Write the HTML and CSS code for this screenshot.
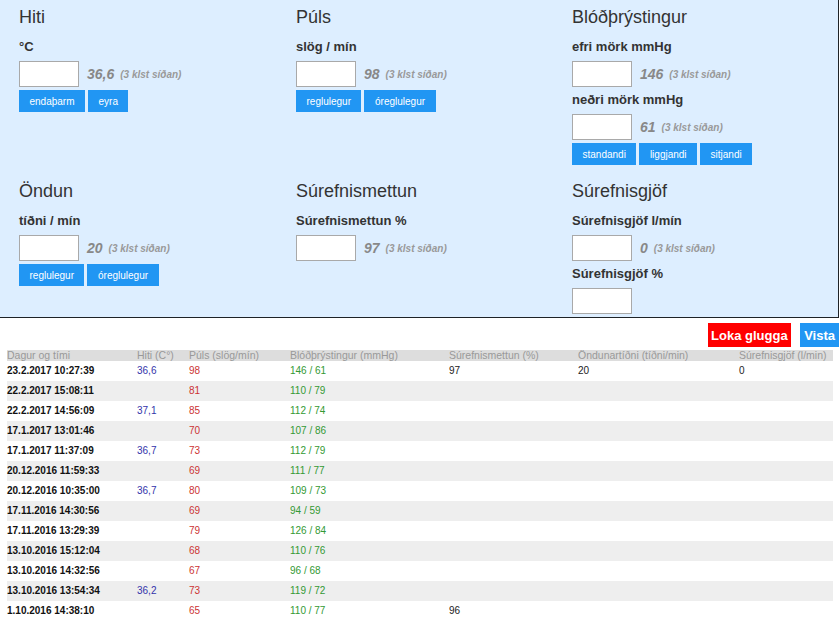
FILE: index.html
```html
<!DOCTYPE html>
<html lang="is">
<head>
<meta charset="utf-8">
<title>Lífsmörk</title>
<link rel="stylesheet" href="styles.css">
</head>
<body>
<div class="panel">
  <section class="sec">
    <h2>Hiti</h2>
    <label>°C</label>
    <div class="inrow"><input type="text"><span class="val">36,6</span><span class="ago">(3 klst síðan)</span></div>
    <div class="btns"><button>endaþarm</button><button>eyra</button></div>
  </section>
  <section class="sec">
    <h2>Púls</h2>
    <label>slög / mín</label>
    <div class="inrow"><input type="text"><span class="val">98</span><span class="ago">(3 klst síðan)</span></div>
    <div class="btns"><button>reglulegur</button><button>óreglulegur</button></div>
  </section>
  <section class="sec">
    <h2>Blóðþrýstingur</h2>
    <label>efri mörk mmHg</label>
    <div class="inrow"><input type="text"><span class="val">146</span><span class="ago">(3 klst síðan)</span></div>
    <label>neðri mörk mmHg</label>
    <div class="inrow"><input type="text"><span class="val">61</span><span class="ago">(3 klst síðan)</span></div>
    <div class="btns"><button>standandi</button><button>liggjandi</button><button>sitjandi</button></div>
  </section>
  <section class="sec">
    <h2>Öndun</h2>
    <label>tíðni / mín</label>
    <div class="inrow"><input type="text"><span class="val">20</span><span class="ago">(3 klst síðan)</span></div>
    <div class="btns"><button>reglulegur</button><button>óreglulegur</button></div>
  </section>
  <section class="sec">
    <h2>Súrefnismettun</h2>
    <label>Súrefnismettun %</label>
    <div class="inrow"><input type="text"><span class="val">97</span><span class="ago">(3 klst síðan)</span></div>
  </section>
  <section class="sec">
    <h2>Súrefnisgjöf</h2>
    <label>Súrefnisgjöf l/mín</label>
    <div class="inrow"><input type="text"><span class="val">0</span><span class="ago">(3 klst síðan)</span></div>
    <label>Súrefnisgjöf %</label>
    <div class="inrow"><input type="text"></div>
  </section>
</div>
<div class="actions">
  <button class="act close">Loka glugga</button>
  <button class="act save">Vista</button>
</div>
<table class="hist">
  <colgroup>
    <col class="c1"><col class="c2"><col class="c3"><col class="c4"><col class="c5"><col class="c6"><col class="c7">
  </colgroup>
  <thead>
    <tr><th>Dagur og tími</th><th>Hiti (C°)</th><th>Púls (slög/mín)</th><th>Blóðþrýstingur (mmHg)</th><th>Súrefnismettun (%)</th><th>Öndunartíðni (tíðni/min)</th><th>Súrefnisgjöf (l/min)</th></tr>
  </thead>
  <tbody>
    <tr><td class="d">23.2.2017 10:27:39</td><td class="t">36,6</td><td class="p">98</td><td class="b">146 / 61</td><td>97</td><td>20</td><td>0</td></tr>
    <tr><td class="d">22.2.2017 15:08:11</td><td class="t"></td><td class="p">81</td><td class="b">110 / 79</td><td></td><td></td><td></td></tr>
    <tr><td class="d">22.2.2017 14:56:09</td><td class="t">37,1</td><td class="p">85</td><td class="b">112 / 74</td><td></td><td></td><td></td></tr>
    <tr><td class="d">17.1.2017 13:01:46</td><td class="t"></td><td class="p">70</td><td class="b">107 / 86</td><td></td><td></td><td></td></tr>
    <tr><td class="d">17.1.2017 11:37:09</td><td class="t">36,7</td><td class="p">73</td><td class="b">112 / 79</td><td></td><td></td><td></td></tr>
    <tr><td class="d">20.12.2016 11:59:33</td><td class="t"></td><td class="p">69</td><td class="b">111 / 77</td><td></td><td></td><td></td></tr>
    <tr><td class="d">20.12.2016 10:35:00</td><td class="t">36,7</td><td class="p">80</td><td class="b">109 / 73</td><td></td><td></td><td></td></tr>
    <tr><td class="d">17.11.2016 14:30:56</td><td class="t"></td><td class="p">69</td><td class="b">94 / 59</td><td></td><td></td><td></td></tr>
    <tr><td class="d">17.11.2016 13:29:39</td><td class="t"></td><td class="p">79</td><td class="b">126 / 84</td><td></td><td></td><td></td></tr>
    <tr><td class="d">13.10.2016 15:12:04</td><td class="t"></td><td class="p">68</td><td class="b">110 / 76</td><td></td><td></td><td></td></tr>
    <tr><td class="d">13.10.2016 14:32:56</td><td class="t"></td><td class="p">67</td><td class="b">96 / 68</td><td></td><td></td><td></td></tr>
    <tr><td class="d">13.10.2016 13:54:34</td><td class="t">36,2</td><td class="p">73</td><td class="b">119 / 72</td><td></td><td></td><td></td></tr>
    <tr><td class="d">1.10.2016 14:38:10</td><td class="t"></td><td class="p">65</td><td class="b">110 / 77</td><td>96</td><td></td><td></td></tr>
  </tbody>
</table>
</body>
</html>
```

FILE: styles.css
```css
html, body {
  margin: 0;
  padding: 0;
  background: #fff;
  font-family: "Liberation Sans", Arial, sans-serif;
  color: #222;
  overflow-x: hidden;
}

.panel {
  box-sizing: border-box;
  width: 839px;
  background: #ddeeff;
  border-right: 1px solid #1e2226;
  border-bottom: 1px solid #1e2226;
  padding: 7px 0 3px 19px;
  display: grid;
  grid-template-columns: 277px 276px 1fr;
  row-gap: 16px;
}

.sec {
  display: flex;
  flex-direction: column;
  align-items: flex-start;
}

.sec h2 {
  margin: 0 0 7px;
  font-size: 18px;
  line-height: 20px;
  font-weight: normal;
  color: #333;
}

.sec label {
  display: block;
  margin: 5px 0 7px;
  font-size: 13px;
  line-height: 15px;
  font-weight: bold;
  color: #333;
}

.inrow {
  display: flex;
  align-items: center;
  height: 26px;
}

.inrow input {
  box-sizing: border-box;
  width: 60px;
  height: 26px;
  margin: 0;
  padding: 2px 4px;
  border: 1px solid #a9a9a9;
  background: #fff;
}

.val {
  margin-left: 8px;
  font-size: 14px;
  font-weight: bold;
  font-style: italic;
  color: #888;
}

.ago {
  margin-left: 6px;
  font-size: 10px;
  font-weight: bold;
  font-style: italic;
  color: #999;
}

.btns {
  display: flex;
  gap: 3px;
  margin-top: 3px;
}

.btns button {
  height: 22px;
  margin: 0;
  padding: 0 10.5px;
  border: 0;
  background: #2196f3;
  color: #fff;
  font-family: "Liberation Sans", Arial, sans-serif;
  font-size: 10px;
}

.actions {
  display: flex;
  justify-content: flex-end;
  gap: 9px;
  width: 839px;
  margin-top: 5px;
}

.act {
  height: 24px;
  margin: 0;
  border: 0;
  color: #fff;
  font-family: "Liberation Sans", Arial, sans-serif;
  font-size: 13px;
  font-weight: bold;
}

.act.close { background: #ff0000; padding: 0 3.5px; }
.act.save { background: #2196f3; padding: 0 4px; }

.hist {
  margin: 3px 0 0 7px;
  width: 826px;
  table-layout: fixed;
  border-collapse: collapse;
  font-size: 10px;
}

.c1 { width: 130px; }
.c2 { width: 52px; }
.c3 { width: 101px; }
.c4 { width: 159px; }
.c5 { width: 129px; }
.c6 { width: 161px; }
.c7 { width: 94px; }

.hist th {
  padding: 0;
  height: 11px;
  line-height: 11px;
  background: #dddddd;
  color: #999;
  font-weight: normal;
  font-size: 10.5px;
  text-align: left;
  white-space: nowrap;
}

.hist td {
  padding: 0;
  height: 20px;
  line-height: 20px;
  color: #222;
  white-space: nowrap;
}

.hist tbody tr:nth-child(even) td { background: #eeeeee; }

.hist td.d { font-weight: bold; color: #111; }
.hist td.t { color: #3333aa; }
.hist td.p { color: #cc3333; }
.hist td.b { color: #339933; }
```
